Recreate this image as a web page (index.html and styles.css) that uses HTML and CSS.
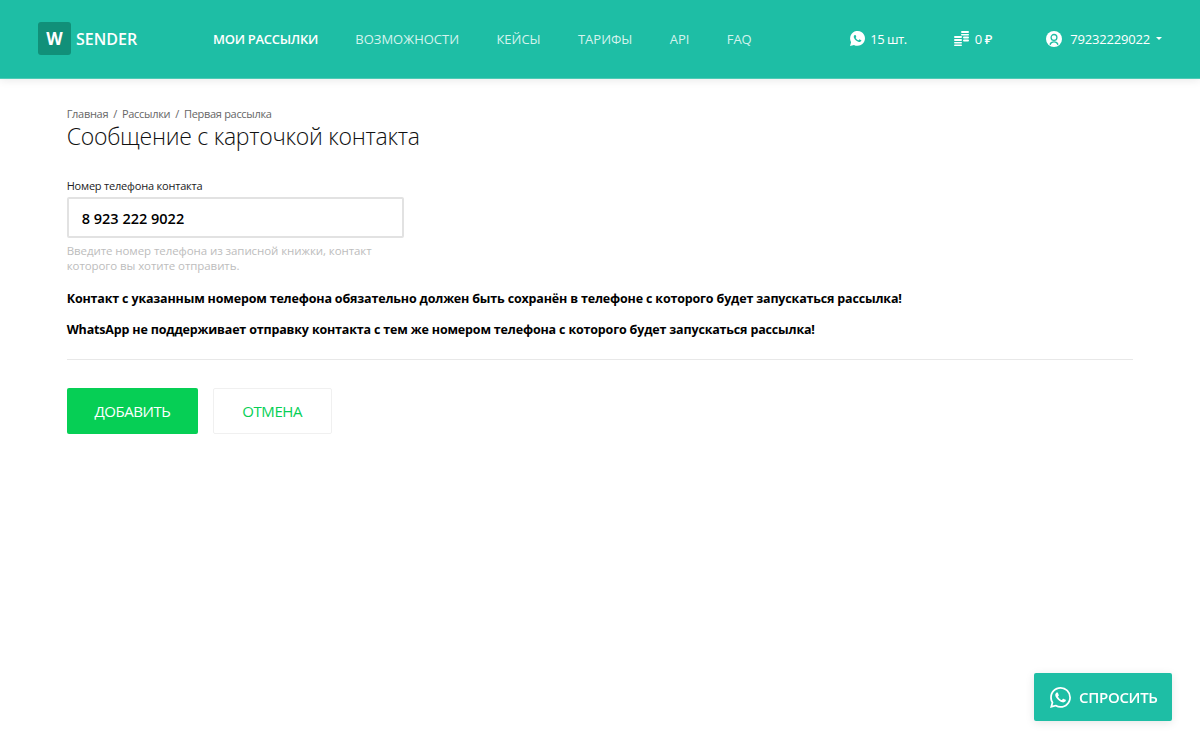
FILE: index.html
```html
<!DOCTYPE html>
<html lang="ru">
<head>
    <meta charset="UTF-8">
    <title>Сообщение с карточкой контакта</title>
    <link rel="stylesheet" href="styles.css">
</head>
<body>
    <header class="topbar">
        <a class="logo" href="#"><span class="logo-mark">W</span><span class="logo-text">SENDER</span></a>
        <nav class="menu">
            <a class="menu-item active" href="#">МОИ РАССЫЛКИ</a>
            <a class="menu-item" href="#">ВОЗМОЖНОСТИ</a>
            <a class="menu-item" href="#">КЕЙСЫ</a>
            <a class="menu-item" href="#">ТАРИФЫ</a>
            <a class="menu-item" href="#">API</a>
            <a class="menu-item" href="#">FAQ</a>
        </nav>
        <div class="stats">
            <div class="stat stat-phones">
                <svg class="stat-icon" viewBox="0 0 24 24" width="15" height="15">
                    <path fill="#fff" d="M.057 24l1.688-6.163A11.9 11.9 0 1 1 6.362 22.346z"/>
                    <path fill="#1ebea5" d="M17.472 14.382c-.297-.149-1.758-.867-2.03-.967-.273-.099-.471-.148-.67.15-.197.297-.767.966-.94 1.164-.173.199-.347.223-.644.075-.297-.15-1.255-.463-2.39-1.475-.883-.788-1.48-1.761-1.653-2.059-.173-.297-.018-.458.13-.606.134-.133.298-.347.446-.52.149-.174.198-.298.298-.497.099-.198.05-.371-.025-.52-.075-.149-.669-1.612-.916-2.207-.242-.579-.487-.5-.669-.51-.173-.008-.371-.01-.57-.01-.198 0-.52.074-.792.372-.272.297-1.04 1.016-1.04 2.479 0 1.462 1.065 2.875 1.213 3.074.149.198 2.096 3.2 5.077 4.487.709.306 1.262.489 1.694.625.712.227 1.36.195 1.871.118.571-.085 1.758-.719 2.006-1.413.248-.694.248-1.289.173-1.413-.074-.124-.272-.198-.57-.347z"/>
                </svg>
                <span>15 шт.</span>
            </div>
            <div class="stat stat-money">
                <svg class="stat-icon" viewBox="0 0 15 15" width="15" height="15" fill="#fff">
                    <rect x="7" y="0" width="8" height="2" rx="1"/>
                    <rect x="7" y="3" width="8" height="1.5" rx="0.7"/>
                    <rect x="9" y="5.5" width="6" height="2" rx="1"/>
                    <rect x="9" y="8.5" width="6" height="2" rx="1"/>
                    <rect x="0" y="5" width="8" height="2" rx="1"/>
                    <rect x="0" y="8" width="8" height="2" rx="1"/>
                    <rect x="0" y="11" width="8" height="1.6" rx="0.8"/>
                    <rect x="0" y="13.4" width="8" height="1.6" rx="0.8"/>
                </svg>
                <span>0 ₽</span>
            </div>
            <div class="stat stat-user">
                <svg class="stat-icon" viewBox="0 0 16 16" width="16" height="16">
                    <circle cx="8" cy="8" r="8" fill="#fff"/>
                    <circle cx="8" cy="6.4" r="2.9" fill="none" stroke="#1ebea5" stroke-width="1.3"/>
                    <path fill="#1ebea5" d="M3.4 13.2c.6-2 2.2-3 4.6-3s4 1 4.6 3a7 7 0 0 1-1.3 1c-.5-1.6-1.6-2.6-3.3-2.6s-2.8 1-3.3 2.6a7 7 0 0 1-1.3-1z"/>
                </svg>
                <span>79232229022</span>
                <span class="caret"></span>
            </div>
        </div>
    </header>

    <main class="content">
        <div class="breadcrumbs">
            <a href="#">Главная</a><span class="sep">/</span><a href="#">Рассылки</a><span class="sep">/</span><a href="#">Первая рассылка</a>
        </div>
        <h1 class="page-title">Сообщение с карточкой контакта</h1>

        <div class="field">
            <label class="field-label" for="phone">Номер телефона контакта</label>
            <input class="field-input" id="phone" type="text" value="8 923 222 9022">
            <p class="field-hint">Введите номер телефона из записной книжки, контакт которого вы хотите отправить.</p>
        </div>

        <p class="notice">Контакт с указанным номером телефона обязательно должен быть сохранён в телефоне с которого будет запускаться рассылка!</p>
        <p class="notice">WhatsApp не поддерживает отправку контакта с тем же номером телефона с которого будет запускаться рассылка!</p>

        <hr class="divider">

        <div class="actions">
            <button class="btn btn-primary">ДОБАВИТЬ</button>
            <button class="btn btn-secondary">ОТМЕНА</button>
        </div>
    </main>

    <a class="ask" href="#">
        <svg viewBox="0 0 24 24" width="21" height="21" fill="#fff">
            <path d="M17.472 14.382c-.297-.149-1.758-.867-2.03-.967-.273-.099-.471-.148-.67.15-.197.297-.767.966-.94 1.164-.173.199-.347.223-.644.075-.297-.15-1.255-.463-2.39-1.475-.883-.788-1.48-1.761-1.653-2.059-.173-.297-.018-.458.13-.606.134-.133.298-.347.446-.52.149-.174.198-.298.298-.497.099-.198.05-.371-.025-.52-.075-.149-.669-1.612-.916-2.207-.242-.579-.487-.5-.669-.51-.173-.008-.371-.01-.57-.01-.198 0-.52.074-.792.372-.272.297-1.04 1.016-1.04 2.479 0 1.462 1.065 2.875 1.213 3.074.149.198 2.096 3.2 5.077 4.487.709.306 1.262.489 1.694.625.712.227 1.36.195 1.871.118.571-.085 1.758-.719 2.006-1.413.248-.694.248-1.289.173-1.413-.074-.124-.272-.198-.57-.347m-5.421 7.403h-.004a9.87 9.87 0 01-5.031-1.378l-.361-.214-3.741.982.998-3.648-.235-.374a9.86 9.86 0 01-1.51-5.26c.001-5.45 4.436-9.884 9.888-9.884 2.64 0 5.122 1.03 6.988 2.898a9.825 9.825 0 012.893 6.994c-.003 5.45-4.437 9.884-9.885 9.884m8.413-18.297A11.815 11.815 0 0012.05 0C5.495 0 .16 5.335.157 11.892c0 2.096.547 4.142 1.588 5.945L.057 24l6.305-1.654a11.882 11.882 0 005.683 1.448h.005c6.554 0 11.89-5.335 11.893-11.893a11.821 11.821 0 00-3.48-8.413z"/>
        </svg>
        <span>СПРОСИТЬ</span>
    </a>
</body>
</html>
```

FILE: styles.css
```css
* {
    box-sizing: border-box;
}
html, body {
    height: 100%;
}
body {
    margin: 0;
    background-color: #fff;
    color: #000;
    font-family: "Open Sans", "Noto Sans", sans-serif;
    font-size: 13px;
    overflow: hidden;
}
a {
    color: inherit;
    text-decoration: none;
}

.topbar {
    display: flex;
    align-items: center;
    height: 79px;
    padding: 0 38px 1px;
    background-color: #1ebea5;
    border-bottom: 1px solid #4ecbb6;
    box-shadow: 0 2px 8px rgba(0,0,0,0.08);
    color: #fff;
}
.logo {
    display: flex;
    align-items: center;
    width: 175px;
    flex-shrink: 0;
}
.logo-mark {
    display: flex;
    align-items: center;
    justify-content: center;
    width: 33px;
    height: 33px;
    background-color: #119079;
    border-radius: 3px;
    font-size: 17px;
    font-weight: 700;
}
.logo-text {
    margin-left: 5px;
    font-size: 16px;
    font-weight: 600;
}
.menu {
    display: flex;
    gap: 37.3px;
}
.menu-item {
    font-size: 13px;
    font-weight: 500;
    color: #d4f3ed;
}
.menu-item.active {
    color: #fff;
    font-weight: 600;
    letter-spacing: -0.28px;
}
.stats {
    display: flex;
    align-items: center;
    margin-left: auto;
    font-size: 13px;
}
.stat {
    display: flex;
    align-items: center;
    gap: 5px;
    font-weight: 500;
}
.stat-phones {
    margin-right: 47px;
    gap: 5px;
    letter-spacing: -0.5px;
}
.stat-money {
    margin-right: 54px;
    gap: 6px;
    letter-spacing: -0.3px;
}
.stat-user {
    gap: 8px;
    letter-spacing: -0.18px;
}
.caret {
    width: 0;
    height: 0;
    margin-left: -2px;
    border-left: 3.5px solid transparent;
    border-right: 3.5px solid transparent;
    border-top: 3.5px solid #fff;
}

.content {
    padding: 28px 66.7px 0;
}
.breadcrumbs {
    height: 16px;
    font-size: 11px;
    line-height: 14px;
    letter-spacing: -0.3px;
    color: #666;
}
.sep {
    margin: 0 5px;
}
.page-title {
    margin: 0;
    height: 26px;
    font-size: 23px;
    line-height: 26px;
    font-weight: 300;
    letter-spacing: -0.27px;
    color: #111;
}
.field {
    width: 337px;
    margin-top: 30px;
}
.field-label {
    display: block;
    height: 14px;
    font-size: 11px;
    line-height: 14px;
    letter-spacing: -0.2px;
    color: #222;
}
.field-input {
    display: block;
    width: 100%;
    height: 41px;
    margin-top: 4px;
    padding: 1px 13px 0;
    border: 2px solid #e2e2e2;
    border-radius: 2px;
    outline: none;
    font-family: inherit;
    font-size: 14.5px;
    font-weight: 600;
    color: #000;
}
.field-hint {
    margin: 5px 0 0;
    font-size: 11.5px;
    line-height: 15px;
    letter-spacing: -0.08px;
    color: #bdbdbd;
}
.notice {
    margin: 18px 0 0;
    font-size: 12.5px;
    line-height: 16px;
    font-weight: 700;
    letter-spacing: -0.17px;
}
.notice + .notice {
    margin-top: 15px;
}
.divider {
    height: 1px;
    margin: 21px 0 0;
    border: none;
    background-color: #e8e8e8;
}
.actions {
    display: flex;
    gap: 14.4px;
    margin-top: 28px;
}
.btn {
    height: 46px;
    border-radius: 2px;
    font-family: inherit;
    font-size: 15px;
    letter-spacing: -0.45px;
    cursor: pointer;
}
.btn-primary {
    width: 131.6px;
    border: none;
    background-color: #06cf55;
    color: #fff;
}
.btn-secondary {
    width: 118.9px;
    border: 1px solid #f0f0f0;
    background-color: #fff;
    color: #06cf55;
}

.ask {
    position: fixed;
    right: 28px;
    bottom: 28px;
    display: flex;
    align-items: center;
    gap: 8px;
    width: 138px;
    height: 48px;
    padding-left: 16px;
    background-color: #1ebea5;
    border-radius: 2px;
    box-shadow: 0 2px 10px rgba(0,0,0,0.1);
    color: #fff;
    font-size: 15px;
    font-weight: 600;
    letter-spacing: -0.3px;
}
```
